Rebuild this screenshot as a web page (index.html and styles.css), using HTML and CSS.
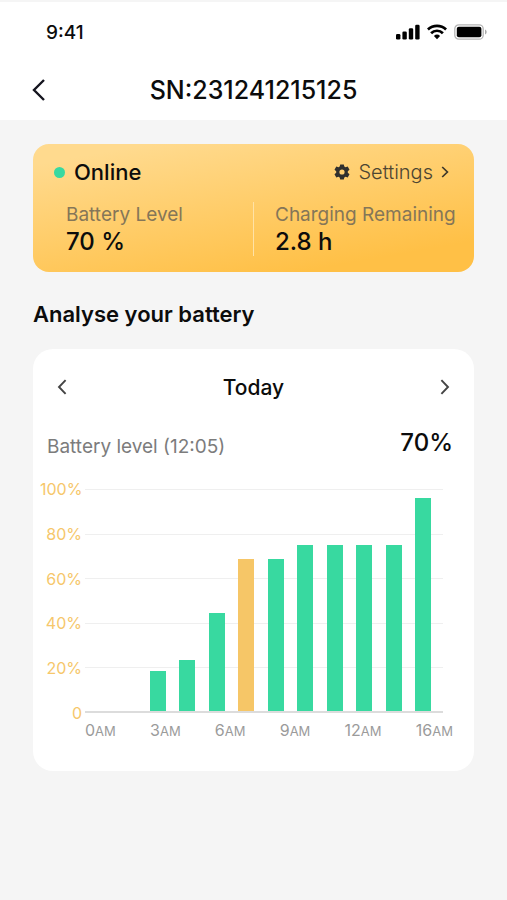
FILE: index.html
```html
<!DOCTYPE html>
<html lang="en">
<head>
    <meta charset="UTF-8">
    <meta name="viewport" content="width=device-width, initial-scale=1.0">
    <title>SN:231241215125</title>
    <link rel="stylesheet" href="styles.css">
</head>
<body>
<header class="top">
    <div class="status-bar">
        <span class="clock">9:41</span>
        <div class="status-icons">
            <svg width="24" height="16" viewBox="0 0 24 16">
                <rect x="0" y="10" width="4.4" height="5.5" rx="1.3"/>
                <rect x="6.4" y="7.5" width="4.4" height="8" rx="1.3"/>
                <rect x="12.8" y="4.3" width="4.4" height="11.2" rx="1.3"/>
                <rect x="19.2" y="0.8" width="4.4" height="14.7" rx="1.3"/>
            </svg>
            <svg width="20" height="16" viewBox="0 0 20 16">
                <g fill="none" stroke="#000" stroke-width="2.7">
                    <path d="M0.9 5.5a13 13 0 0 1 18.2 0"/>
                    <path d="M4.1 9.2a8.3 8.3 0 0 1 11.8 0"/>
                </g>
                <path d="M10 15.2l-3.1-3.2a4.5 4.5 0 0 1 6.2 0z"/>
            </svg>
            <svg width="33" height="16" viewBox="0 0 33 16">
                <rect x="0.8" y="0.8" width="28.4" height="14.4" rx="4" fill="none" stroke="#b5b5b5" stroke-width="1.3"/>
                <rect x="2.8" y="2.8" width="24.6" height="10.4" rx="2"/>
                <path d="M31 5.5c2.2 1 2.2 4 0 5z" fill="#aaa"/>
            </svg>
        </div>
    </div>
    <div class="title-bar">
        <button class="icon-btn" aria-label="Back">
            <svg width="14" height="24" viewBox="0 0 14 24"><path d="M12 2L2 12l10 10" fill="none" stroke="#15151f" stroke-width="2.4"/></svg>
        </button>
        <h1>SN:231241215125</h1>
    </div>
</header>

<main class="content">
    <section class="status-card">
        <div class="status-head">
            <span class="online">Online</span>
            <a class="settings" href="#settings">
                <svg width="16" height="16" viewBox="0 0 16 16">
                    <path fill-rule="evenodd" fill="#30302e" d="M6.2 0.4h3.6l0.5 2.2 1.2 0.7 2.2-0.7 1.8 3.1-1.7 1.6v1.4l1.7 1.6-1.8 3.1-2.2-0.7-1.2 0.7-0.5 2.2H6.2l-0.5-2.2-1.2-0.7-2.2 0.7-1.8-3.1 1.7-1.6V7.3L0.5 5.7l1.8-3.1 2.2 0.7 1.2-0.7zM8 5.4a2.6 2.6 0 1 0 0 5.2a2.6 2.6 0 0 0 0-5.2z"/>
                </svg>
                <span>Settings</span>
                <svg width="8" height="12" viewBox="0 0 8 12"><path d="M1.2 1L6.4 6l-5.2 5" fill="none" stroke="#3c372b" stroke-width="1.7"/></svg>
            </a>
        </div>
        <dl class="stats">
            <div class="stat">
                <dt>Battery Level</dt>
                <dd>70 %</dd>
            </div>
            <div class="stat">
                <dt>Charging Remaining</dt>
                <dd>2.8 h</dd>
            </div>
        </dl>
    </section>

    <h2>Analyse your battery</h2>

    <section class="chart-card">
        <div class="day-nav">
            <button class="icon-btn" aria-label="Previous day">
                <svg width="10" height="16" viewBox="0 0 10 16"><path d="M8.6 1.2L2 8l6.6 6.8" fill="none" stroke="#444" stroke-width="1.9"/></svg>
            </button>
            <h3>Today</h3>
            <button class="icon-btn" aria-label="Next day">
                <svg width="10" height="16" viewBox="0 0 10 16"><path d="M1.4 1.2L8 8l-6.6 6.8" fill="none" stroke="#444" stroke-width="1.9"/></svg>
            </button>
        </div>
        <div class="reading">
            <span class="reading-label">Battery level (12:05)</span>
            <span class="reading-value">70%</span>
        </div>
        <div class="chart">
            <div class="y-axis">
                <span>100%</span>
                <span>80%</span>
                <span>60%</span>
                <span>40%</span>
                <span>20%</span>
                <span>0</span>
            </div>
            <div class="grid-lines">
                <i></i><i></i><i></i><i></i><i></i><i></i>
            </div>
            <div class="plot">
                <div class="bar" style="height: 18%"></div>
                <div class="bar" style="height: 23%"></div>
                <div class="bar" style="height: 44%"></div>
                <div class="bar current" style="height: 68.5%"></div>
                <div class="bar" style="height: 68.5%"></div>
                <div class="bar" style="height: 75%"></div>
                <div class="bar" style="height: 75%"></div>
                <div class="bar" style="height: 75%"></div>
                <div class="bar" style="height: 75%"></div>
                <div class="bar" style="height: 96%"></div>
            </div>
            <div class="x-axis">
                <span>0<small>AM</small></span>
                <span>3<small>AM</small></span>
                <span>6<small>AM</small></span>
                <span>9<small>AM</small></span>
                <span>12<small>AM</small></span>
                <span>16<small>AM</small></span>
            </div>
        </div>
    </section>
</main>
</body>
</html>
```
FILE: styles.css
```css
* { box-sizing: border-box; }
body { margin: 0; min-height: 100vh; background: #f5f5f5; color: #0c0c0c; font-family: Inter, "Liberation Sans", sans-serif; }
h1, h2, h3, dl, dd { margin: 0; font-weight: 500; }
svg { display: block; }

.icon-btn { display: flex; align-items: center; justify-content: center; padding: 0; border: none; background: none; cursor: pointer; }

/* header */
.top { background: #fff; border-top: 2px solid #f5f5f5; }
.status-bar { display: flex; justify-content: space-between; align-items: center; height: 60px; padding: 0 20px 0 46px; }
.clock { font-size: 19px; font-weight: 500; }
.status-icons { display: flex; gap: 7px; }
.title-bar { display: grid; grid-template-columns: 14px 1fr 14px; align-items: center; height: 58px; padding: 0 32px 2px; }
.title-bar h1 { font-size: 25px; text-align: center; }

.content { padding: 24px 33px; }

/* status card */
.status-card { height: 128px; padding: 14px 21px; border-radius: 16px; background: linear-gradient(170deg, #ffda8e 10%, #ffc046 85%); }
.status-head { display: flex; justify-content: space-between; align-items: center; height: 28px; padding-right: 4px; }
.online { display: flex; align-items: center; gap: 9px; font-size: 22px; font-weight: 500; }
.online::before { content: ""; width: 11px; height: 11px; border-radius: 50%; background: #38d9a0; }
.settings { display: flex; align-items: center; gap: 8px; color: #4c4532; font-size: 20px; font-weight: 300; text-decoration: none; }
.stats { display: grid; grid-template-columns: 187px 1fr; margin: 16px 0 0 12px; }
.stat + .stat { padding-left: 21px; border-left: 1px solid #ffe2a6; }
.stat dt { color: #857658; font-size: 19px; font-weight: 400; line-height: 26px; white-space: nowrap; }
.stat dd { color: #0c0c0c; font-size: 24px; line-height: 28px; }

.content h2 { margin: 28px 0 21px; font-size: 22px; font-weight: 600; line-height: 28px; }

/* chart card */
.chart-card { padding: 24px 21px 30px 7px; border-radius: 20px; background: #fff; }
.day-nav { display: flex; justify-content: space-between; align-items: center; height: 28px; padding: 0 3px 0 17px; }
.day-nav h3 { font-size: 21px; }
.reading { display: flex; justify-content: space-between; align-items: flex-end; margin: 28px 0 32px 7px; height: 28px; }
.reading-label { color: #7c7c7c; font-size: 19px; line-height: 20px; }
.reading-value { font-size: 24px; font-weight: 500; line-height: 28px; }

.chart { display: grid; grid-template-columns: 42px 1fr; column-gap: 3px; }
.y-axis { display: flex; flex-direction: column; justify-content: space-between; margin: -8px 0; color: #f6c76b; font-size: 16px; line-height: 16px; text-align: right; }
/* lines and bars share one cell, bars on top */
.grid-lines, .plot { grid-area: 1 / 2; margin-right: 10px; }
.grid-lines { display: flex; flex-direction: column; justify-content: space-between; }
.grid-lines i { height: 1px; background: #efefef; }
.plot { display: flex; justify-content: space-between; align-items: flex-end; height: 224px; padding: 0 12px 0 65px; border-bottom: 2px solid #dcdcdc; z-index: 1; }
.bar { width: 16px; background: #38d9a0; }
.bar.current { background: #f6c667; }
.x-axis { grid-column: 2; display: flex; justify-content: space-between; margin-top: 7px; color: #9b9b9b; font-size: 16px; line-height: 20px; }
.x-axis small { font-size: 13px; }
```
